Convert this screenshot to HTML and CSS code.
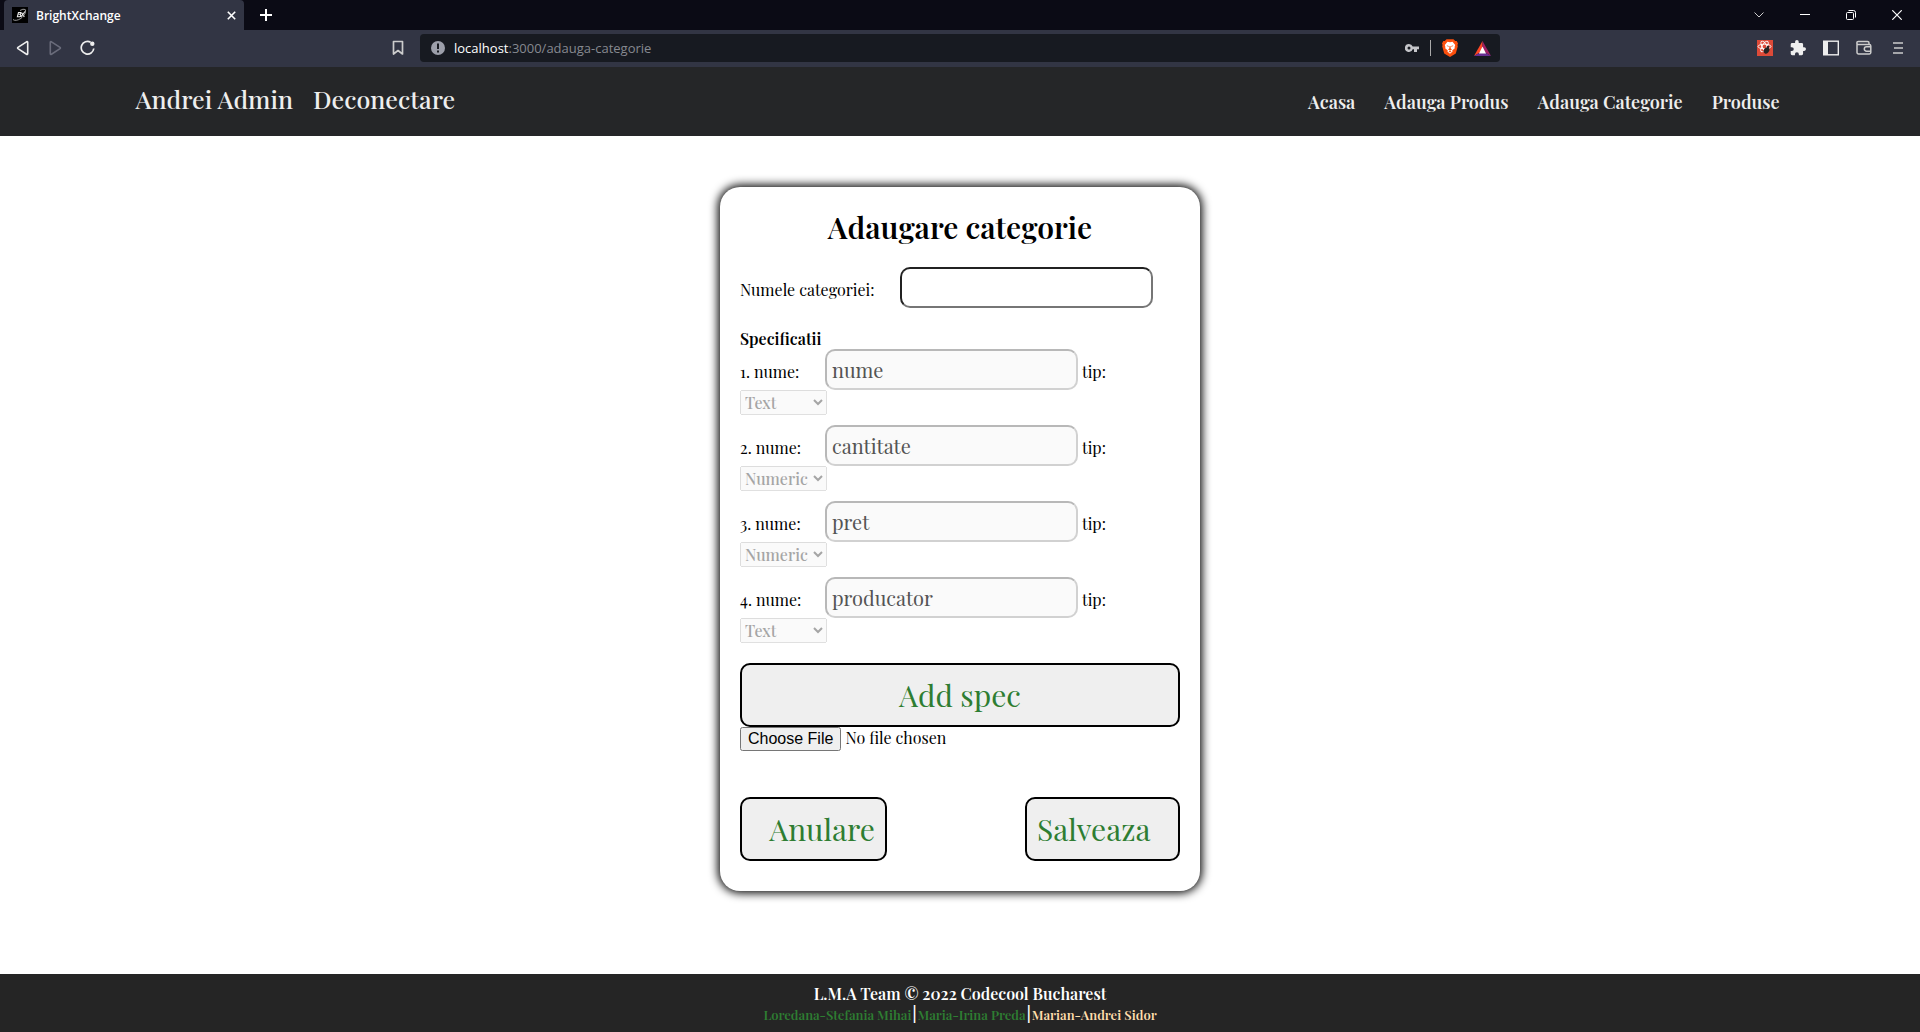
FILE: index.html
```html
<!DOCTYPE html>
<html lang="ro">
<head>
<meta charset="utf-8">
<title>BrightXchange</title>
<link rel="stylesheet" href="styles.css">
</head>
<body>
<div class="browser">
  <div class="tabstrip">
    <div class="tab">
      <svg class="favicon" width="16" height="16" viewBox="0 0 16 16"><rect width="16" height="16" fill="#000"/><path d="M6 5.500h2.600q.8 1.300-.9 1.800 2 .6.2 2.400H5.400L6.500 5.500M9.500 5.500l2.800 4.500M13 4.500L8.800 10" fill="none" stroke="#eee" stroke-width="1.100"/><path d="M1 12.500c1.500 1.500 5 1 8-1.200 3-2.300 5-5.500 4.500-8.300M8 3.500q3-2 5.500-1" fill="none" stroke="#aaa" stroke-width=".9"/></svg>
      <span class="tab-title">BrightXchange</span>
      <button class="icon-btn" type="button" aria-label="Close tab"><svg width="9" height="9" viewBox="0 0 9 9"><path d="M.8.8l7.400 7.400M8.200.8L.8 8.200" stroke="#fff" stroke-width="1.600"/></svg></button>
    </div>
    <button class="icon-btn new-tab" type="button" aria-label="New tab"><svg width="12" height="12" viewBox="0 0 12 12"><path d="M6 0v12M0 6h12" stroke="#fff" stroke-width="2"/></svg></button>
    <div class="window-controls">
      <button class="icon-btn" type="button" aria-label="Search tabs"><svg width="10" height="10" viewBox="0 0 10 10"><path d="M.5 2.500L5 7l4.500-4.500" fill="none" stroke="#ccc"/></svg></button>
      <button class="icon-btn" type="button" aria-label="Minimize"><svg width="10" height="10" viewBox="0 0 10 10"><path d="M0 4.500h10" stroke="#fff"/></svg></button>
      <button class="icon-btn" type="button" aria-label="Restore"><svg width="10" height="10" viewBox="0 0 10 10"><rect x=".5" y="2.500" width="7" height="7" rx="1" fill="none" stroke="#fff"/><path d="M2.500.5h5a2 2 0 0 1 2 2v5" fill="none" stroke="#fff"/></svg></button>
      <button class="icon-btn" type="button" aria-label="Close"><svg width="10" height="10" viewBox="0 0 10 10"><path d="M.3.3l9.400 9.400M9.700.3L.3 9.700" stroke="#fff" stroke-width="1.200"/></svg></button>
    </div>
  </div>
  <div class="toolbar">
    <div class="nav-buttons">
      <button class="icon-btn" type="button" aria-label="Back"><svg width="14" height="16" viewBox="0 0 14 16"><path d="M10.500 1.800L2 7.400q-.8.600 0 1.200l8.500 5.600q1.200.5 1.200-.8V2.600q0-1.300-1.200-.8z" fill="none" stroke="#eee" stroke-width="1.600"/></svg></button>
      <button class="icon-btn" type="button" aria-label="Forward"><svg width="14" height="16" viewBox="0 0 14 16"><path d="M3.500 1.800L12 7.400q.8.600 0 1.200l-8.500 5.600q-1.200.5-1.200-.8V2.600q0-1.300 1.200-.8z" fill="none" stroke="#6a6c7b" stroke-width="1.600"/></svg></button>
      <button class="icon-btn" type="button" aria-label="Reload"><svg width="16" height="16" viewBox="0 0 16 16"><path d="M10.600 2.200A6.300 6.300 0 1 0 13.800 8.500" fill="none" stroke="#eee" stroke-width="1.700"/><circle cx="12.300" cy="3.800" r="2.200" fill="#eee"/></svg></button>
      <button class="icon-btn bookmark" type="button" aria-label="Bookmark"><svg width="12" height="16" viewBox="0 0 12 16"><path d="M1.500 1.500h9v12.500L6 10.500 1.500 14z" fill="none" stroke="#ccc" stroke-width="1.700" stroke-linejoin="round"/></svg></button>
    </div>
    <div class="address">
      <svg width="14" height="14" viewBox="0 0 14 14"><circle cx="7" cy="7" r="7" fill="#9c9faa"/><path d="M7 2.500v5.500M7 9.500v2" stroke="#171a21" stroke-width="2"/></svg>
      <span class="url"><span class="host">localhost</span>:3000/adauga-categorie</span>
      <svg width="14" height="10" viewBox="0 0 14 10"><path fill-rule="evenodd" d="M4 1a4 4 0 1 0 3.700 5.200H9V9h3V6.200h2V3.600H7.700A4 4 0 0 0 4 1zm0 2.500a1.500 1.500 0 1 1 0 3 1.500 1.500 0 0 1 0-3z" fill="#c4c5c9"/></svg>
      <span class="divider"></span>
      <svg class="shield" width="16" height="18" viewBox="0 0 16 18"><path d="M4.500.3h7L13.200 2l1.500-.1L16 4.500l-.6 1.500.4 1.200-2 7.300L8 18l-5.800-3.500-2-7.300.4-1.200L0 4.500 1.300 1.900 2.800 2z" fill="#fb4f0d"/><path d="M5.500 2.800L8 3.200l2.500-.4 2.700 3.100-.6 2 .2 1.300-2.600 2.300.4 1.100L8 14.800l-2.600-2.200.4-1.100-2.600-2.300.2-1.300-.6-2z" fill="#fff"/><path d="M4.500 6.200l2.300.7-.6 1zM11.500 6.200l-2.300.7.6 1zM7.500 7h1l.2 2.500L10 10.500l-2 1-2-1 1.300-1zM6.500 12.300l1.500-.6 1.500.6L8 13.500z" fill="#fb4f0d"/></svg>
      <svg width="17" height="15" viewBox="0 0 17 15"><path d="M8.500 0L0 15l8.500-5z" fill="#ff4724"/><path d="M8.500 0L17 15l-8.500-5z" fill="#9e1f63"/><path d="M0 15h17L8.500 10z" fill="#662d91"/><path d="M8.500 5.500l3.500 7H5z" fill="#fff"/></svg>
    </div>
    <div class="extensions">
      <button class="icon-btn" type="button" aria-label="React tools"><svg width="16" height="16" viewBox="0 0 16 16"><rect width="16" height="16" fill="#dc4a38"/><g fill="none" stroke="#fff" stroke-width=".9"><ellipse cx="7.500" cy="6.500" rx="6.500" ry="2.300"/><ellipse cx="7.500" cy="6.500" rx="6" ry="2.300" transform="rotate(60 7.500 6.500)"/><ellipse cx="7.500" cy="6.500" rx="6" ry="2.300" transform="rotate(120 7.500 6.500)"/></g><ellipse cx="9.500" cy="10.500" rx="2.600" ry="3.300" fill="#222" transform="rotate(35 9.500 10.500)"/><circle cx="11" cy="7" r="1.200" fill="#222"/></svg></button>
      <button class="icon-btn" type="button" aria-label="Extensions"><svg width="16" height="16" viewBox="1 1 22 22"><path d="M20.500 11H19V7a2 2 0 0 0-2-2h-4V3.500a2.500 2.500 0 0 0-5 0V5H4a2 2 0 0 0-2 2v3.800h1.500a2.700 2.700 0 0 1 0 5.400H2V20a2 2 0 0 0 2 2h3.800v-1.500a2.700 2.700 0 0 1 5.400 0V22H17a2 2 0 0 0 2-2v-4h1.500a2.500 2.500 0 0 0 0-5z" fill="#eee"/></svg></button>
      <button class="icon-btn" type="button" aria-label="Sidebar"><svg width="16" height="16" viewBox="0 0 16 16"><rect x=".7" y="1.200" width="14.600" height="13.600" fill="none" stroke="#eee" stroke-width="1.400"/><path d="M0 1h5v14H0z" fill="#eee"/></svg></button>
      <button class="icon-btn" type="button" aria-label="Wallet"><svg width="16" height="16" viewBox="0 0 16 16"><path d="M13 4V3a1.500 1.500 0 0 0-1.500-1.500H2.300a1.500 1.500 0 0 0 0 3h11A1.500 1.500 0 0 1 14.800 6v6.500a1.500 1.500 0 0 1-1.500 1.500H2.500A1.500 1.500 0 0 1 1 12.500V3M15 6.800h-4.500a2.200 2.200 0 0 0 0 4.400H15" fill="none" stroke="#ccc" stroke-width="1.500"/></svg></button>
      <button class="icon-btn" type="button" aria-label="Menu"><svg width="10" height="14" viewBox="0 0 10 14"><path d="M0 2h10M1 7h9M0 12h10" stroke="#ccc" stroke-width="1.600"/></svg></button>
    </div>
  </div>
</div>

<header class="site-header">
  <nav class="account">
    <a href="#">Andrei Admin</a>
    <a href="#">Deconectare</a>
  </nav>
  <nav class="menu">
    <a href="#">Acasa</a>
    <a href="#">Adauga Produs</a>
    <a href="#">Adauga Categorie</a>
    <a href="#">Produse</a>
  </nav>
</header>

<main>
  <form class="card">
    <h1>Adaugare categorie</h1>
    <div class="field name-field">
      <label for="category">Numele categoriei:</label>
      <input class="text-input" id="category" type="text">
    </div>
    <h2>Specificatii</h2>
    <div class="spec">
      <div class="field">
        <label for="spec1">1. nume:</label>
        <input class="text-input" id="spec1" type="text" value="nume" disabled>
        <label class="type-label" for="type1">tip:</label>
      </div>
      <select id="type1" disabled><option>Text</option><option>Numeric</option></select>
    </div>
    <div class="spec">
      <div class="field">
        <label for="spec2">2. nume:</label>
        <input class="text-input" id="spec2" type="text" value="cantitate" disabled>
        <label class="type-label" for="type2">tip:</label>
      </div>
      <select id="type2" disabled><option>Text</option><option selected>Numeric</option></select>
    </div>
    <div class="spec">
      <div class="field">
        <label for="spec3">3. nume:</label>
        <input class="text-input" id="spec3" type="text" value="pret" disabled>
        <label class="type-label" for="type3">tip:</label>
      </div>
      <select id="type3" disabled><option>Text</option><option selected>Numeric</option></select>
    </div>
    <div class="spec">
      <div class="field">
        <label for="spec4">4. nume:</label>
        <input class="text-input" id="spec4" type="text" value="producator" disabled>
        <label class="type-label" for="type4">tip:</label>
      </div>
      <select id="type4" disabled><option>Text</option><option>Numeric</option></select>
    </div>
    <button class="btn add" type="button">Add spec</button>
    <input class="file" type="file" aria-label="Imagine">
    <div class="actions">
      <button class="btn cancel" type="button">Anulare</button>
      <button class="btn save" type="submit">Salveaza</button>
    </div>
  </form>
</main>

<footer class="site-footer">
  <p class="team">L.M.A Team © 2022 Codecool Bucharest</p>
  <p class="authors"><a href="#">Loredana-Stefania Mihai</a><span class="bar">|</span><a href="#">Maria-Irina Preda</a><span class="bar">|</span><a class="current" href="#">Marian-Andrei Sidor</a></p>
</footer>
</body>
</html>
```
FILE: styles.css
```css
* {
  box-sizing: border-box;
}

body {
  margin: 0;
  min-height: 100vh;
  display: flex;
  flex-direction: column;
  background: #fff;
  color: #000;
  font: 16px/21px "Playfair Display", "Liberation Serif", serif;
}

a {
  color: inherit;
  text-decoration: none;
}

svg {
  display: block;
  flex: none;
}

/* Browser frame */
.browser {
  font-family: "Segoe UI", "Open Sans", sans-serif;
}

.icon-btn {
  display: flex;
  align-items: center;
  justify-content: center;
  padding: 0;
  border: 0;
  background: none;
}

.tabstrip {
  display: flex;
  align-items: center;
  height: 30px;
  padding-left: 4px;
  background: #0b0b15;
}

.tab {
  display: flex;
  align-items: center;
  gap: 8px;
  width: 240px;
  height: 30px;
  padding: 0 8px;
  border-radius: 4px 4px 0 0;
  background: #323544;
}

.tab-title {
  flex: 1;
  color: #fff;
  font-size: 12px;
  font-weight: 600;
}

.new-tab {
  margin-left: 16px;
}

.window-controls {
  display: flex;
  gap: 36px;
  margin-left: auto;
  padding-right: 18px;
}

.toolbar {
  display: flex;
  align-items: center;
  height: 37px;
  padding-bottom: 1px;
  background: #323544;
}

.nav-buttons {
  display: flex;
  flex: 1;
  gap: 18px;
  padding: 0 16px;
}

.bookmark {
  margin-left: auto;
}

.address {
  display: flex;
  align-items: center;
  width: 1080px;
  height: 28px;
  padding: 0 9px 0 11px;
  border-radius: 4px;
  background: #171a21;
}

.url {
  flex: 1;
  margin-left: 9px;
  color: #868990;
  font-size: 13px;
  line-height: 20px;
}

.host {
  color: #fff;
}

.divider {
  width: 1px;
  height: 16px;
  margin: 0 11px;
  background: #aaa;
}

.shield {
  margin-right: 16px;
}

.extensions {
  display: flex;
  flex: 1;
  justify-content: flex-end;
  align-items: center;
  gap: 17px;
  padding: 0 17px 0 15px;
}

.extensions > :last-child {
  margin-left: 4px;
}

/* Site header */
.site-header {
  display: flex;
  justify-content: space-between;
  align-items: baseline;
  height: 69px;
  padding: 14px 7% 0;
  background: #252628;
  color: #eee;
}

.account {
  display: flex;
  gap: 20px;
  padding-left: 1px;
  font-size: 25px;
  font-weight: 500;
  line-height: 36px;
}

.menu {
  display: flex;
  gap: 29px;
  padding-right: 6px;
  font-size: 18px;
  font-weight: 600;
  line-height: 24px;
}

/* Form card */
main {
  flex: 1;
  padding: 51px 20px;
}

.card {
  width: 480px;
  max-width: 100%;
  margin: 0 auto;
  padding: 20px 20px 30px;
  border-radius: 20px;
  background: #fff;
  box-shadow: 0 0 10px 2px #000;
}

h1 {
  margin: 0;
  text-align: center;
  font-size: 30px;
  font-weight: 600;
  line-height: 40px;
}

h2 {
  margin: 0;
  font-size: 16px;
  font-weight: 600;
}

.field {
  display: flex;
  align-items: center;
}

.field label {
  width: 85px;
  padding-top: 4px;
}

.name-field {
  margin: 20px 0;
}

.name-field label {
  width: 160px;
}

.field .type-label {
  width: auto;
  margin-left: 4px;
}

.text-input {
  width: 253px;
  height: 41px;
  padding: 2px 5px;
  border: 2px inset #767676;
  border-radius: 10px;
  background: #fff;
  font: inherit;
  font-size: 20px;
}

.text-input:disabled {
  border-color: rgba(118, 118, 118, 0.3);
  background: #fafafa;
  color: #545454;
}

.spec {
  margin-bottom: 10px;
}

select {
  display: block;
  width: 87px;
  height: 25px;
  padding: 0;
  font: inherit;
  font-weight: 500;
}

.btn {
  height: 64px;
  padding: 0 10px;
  border: 2px solid #000;
  border-radius: 10px;
  background: #efefef;
  color: #2e7d32;
  font: inherit;
  font-size: 30px;
}

.add {
  display: block;
  width: 100%;
  margin-top: 20px;
}

.file {
  display: block;
  width: 100%;
  height: 24px;
  font: inherit;
}

.file::file-selector-button {
  height: 24px;
  font: 16px "Liberation Sans", sans-serif;
}

.actions {
  display: flex;
  justify-content: space-between;
  margin-top: 46px;
}

.cancel {
  width: 147px;
  text-align: right;
}

.save {
  width: 155px;
  text-align: left;
}

/* Site footer */
.site-footer {
  padding: 9px 0 7px;
  background: #252525;
  color: #fff;
  font-weight: 600;
  text-align: center;
}

.site-footer p {
  margin: 0;
}

.authors {
  color: #2e7d32;
  font-size: 13px;
}

.bar {
  padding: 0 1px;
  color: #fff;
  font-size: 16px;
  font-weight: 700;
  line-height: 16px;
}

.current {
  color: #ffdead;
}
```
